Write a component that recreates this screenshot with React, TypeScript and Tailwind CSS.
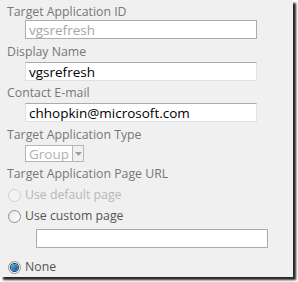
import React from 'react'

const font = { fontFamily: '"Open Sans", "Segoe UI", sans-serif' }

const Radio = ({ checked = false, disabled = false }: { checked?: boolean; disabled?: boolean }) => (
  <span
    className={`flex h-[13px] w-[13px] items-center justify-center rounded-full border ${
      disabled ? 'border-[#cfcfcf] bg-[#f4f4f4]' : 'border-[#8f8f8f] bg-gradient-to-br from-[#e6e6e6] to-[#ffffff]'
    }`}
  >
    {checked && <span className="h-[7px] w-[7px] rounded-full bg-gradient-to-br from-[#5fb4ea] to-[#0d4f86] ring-1 ring-[#1c3f66]" />}
  </span>
)

const App = () => {
  return (
    <div className="h-[282px] w-[298px] bg-white">
      <div
        style={font}
        className="flex h-[277px] w-[293px] flex-col bg-[#f0f0f0] text-[12.3px] leading-[16px] text-[#777] shadow-[3px_3px_2px_rgba(0,0,0,0.85)]"
      >
        <div className="ml-[7px] mt-[4px]">Target Application ID</div>
        <div className="ml-[25px] mt-[0px] flex h-[19px] w-[232px] items-center border border-[#ababab] bg-white px-[3px] text-[13.5px] text-[#a6a6a6]">
          vgsrefresh
        </div>

        <div className="ml-[7px] mt-[5px]">Display Name</div>
        <div className="ml-[25px] mt-[2px] flex h-[19px] w-[232px] items-center border border-[#e0e0e6] border-t-[#ababab] bg-white px-[3px] text-[13.5px] text-black">
          vgsrefresh
        </div>

        <div className="ml-[7px] mt-[4px]">Contact E-mail</div>
        <div className="ml-[25px] mt-[2px] flex h-[19px] w-[232px] items-center border border-[#e0e0e6] border-t-[#ababab] bg-white px-[3px] text-[13.5px] text-black">
          chhopkin@microsoft.com
        </div>

        <div className="ml-[7px] mt-[5px]">Target Application Type</div>
        <div className="ml-[25px] mt-[2px] flex h-[17px] w-[59px] border border-[#b5b5b5] bg-white text-[13.5px] text-[#b0b0b0]">
          <span className="flex flex-1 items-center px-[3px]">Group</span>
          <span className="flex w-[16px] items-center justify-center border-l border-[#b5b5b5] bg-[#f0f0f0]">
            <svg width="7" height="4" viewBox="0 0 7 4">
              <path d="M0 0h7L3.5 4z" fill="#a0a0a0" />
            </svg>
          </span>
        </div>

        <div className="ml-[7px] mt-[4px]">Target Application Page URL</div>
        <div className="ml-[8px] mt-[5px] flex items-center gap-[4px] text-[#b8b8b8]">
          <Radio disabled />
          <span>Use default page</span>
        </div>
        <div className="ml-[8px] mt-[5px] flex items-center gap-[4px] text-[#555]">
          <Radio />
          <span>Use custom page</span>
        </div>
        <div className="ml-[36px] mt-[5px] h-[19px] w-[232px] border border-[#ababab] bg-white" />
        <div className="ml-[8px] mt-[11px] flex items-center gap-[4px] text-[#555]">
          <Radio checked />
          <span>None</span>
        </div>
      </div>
    </div>
  )
}

export default App
